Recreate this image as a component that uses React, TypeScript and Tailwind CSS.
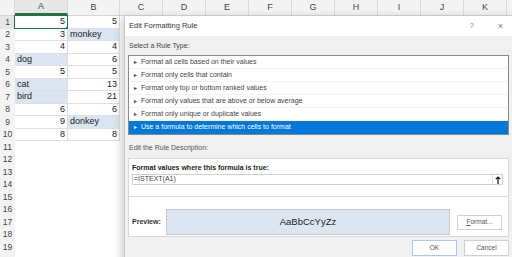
import React from "react";

const COLS = ["A", "B", "C", "D", "E", "F", "G", "H", "I", "J", "K", ""];
const WIDTHS = [53, 52, 43, 43, 43, 43, 43, 43, 43, 43, 43, 43];

type Cell = { v: string; num?: boolean; fill?: boolean };
const DATA: [Cell, Cell][] = [
  [{ v: "5", num: true }, { v: "5", num: true }],
  [{ v: "3", num: true }, { v: "monkey", fill: true }],
  [{ v: "4", num: true }, { v: "4", num: true }],
  [{ v: "dog", fill: true }, { v: "6", num: true }],
  [{ v: "5", num: true }, { v: "5", num: true }],
  [{ v: "cat", fill: true }, { v: "13", num: true }],
  [{ v: "bird", fill: true }, { v: "21", num: true }],
  [{ v: "6", num: true }, { v: "6", num: true }],
  [{ v: "9", num: true }, { v: "donkey", fill: true }],
  [{ v: "8", num: true }, { v: "8", num: true }],
];

const RULES = [
  "Format all cells based on their values",
  "Format only cells that contain",
  "Format only top or bottom ranked values",
  "Format only values that are above or below average",
  "Format only unique or duplicate values",
  "Use a formula to determine which cells to format",
];

function Sheet() {
  const rows = Array.from({ length: 19 }, (_, i) => i + 1);
  return (
    <div className="flex flex-col h-[257px]" style={{ fontFamily: '"Liberation Sans", Arial, sans-serif' }}>
      <div className="flex h-[16px] shrink-0 bg-[#f3f3f3] border-b border-[#d4d4d4]">
        <div className="w-[15px] shrink-0 border-r border-[#dadada]" />
        {COLS.map((c, i) => (
          <div
            key={i}
            style={{ width: WIDTHS[i] }}
            className={`shrink-0 flex items-center justify-center text-[9px] text-[#444] border-r border-[#dadada] ${
              i === 0 ? "bg-[#e6e6e6] border-b-2 border-b-[#217346]" : ""
            }`}
          >
            {c}
          </div>
        ))}
      </div>
      {rows.map((r) => {
        const d = DATA[r - 1];
        return (
          <div key={r} className="flex h-[12.5px] shrink-0">
            <div
              className={`w-[15px] shrink-0 flex items-center justify-center text-[8.5px] text-[#444] ${
                r === 1 ? "bg-[#e6e6e6]" : "bg-[#f3f3f3]"
              }`}
            >
              {r}
            </div>
            {d
              ? d.map((cell, ci) => (
                  <div
                    key={ci}
                    style={{ width: WIDTHS[ci] }}
                    className={`shrink-0 relative flex items-center px-[2px] text-[9px] text-[#222] border-r border-b border-[#dedede] ${
                      cell.num ? "justify-end" : "justify-start"
                    } ${cell.fill ? "bg-[#dbe5f1]" : "bg-white"}`}
                  >
                    {cell.v}
                    {r === 1 && ci === 0 && (
                      <>
                        <div className="absolute inset-[-1px] border border-[#217346]" />
                        <div className="absolute right-[-2px] bottom-[-2px] w-[3px] h-[3px] bg-[#217346]" />
                      </>
                    )}
                  </div>
                ))
              : null}
          </div>
        );
      })}
      <div className="flex flex-1">
        <div className="w-[15px] shrink-0 bg-[#f3f3f3]" />
      </div>
    </div>
  );
}

function Dialog() {
  return (
    <div
      className="absolute left-[124px] top-[15px] w-[390px] h-[250px] bg-[#f0f0f0] border border-[#c8c8c8] shadow-[-3px_2px_8px_rgba(0,0,0,0.18)] flex flex-col text-[#333]"
      style={{ fontFamily: '"Liberation Sans", Arial, sans-serif' }}
    >
      <div className="h-[20px] bg-white flex items-center pl-[4px] pr-[10px] shrink-0">
        <span className="text-[7.5px] text-[#333]">Edit Formatting Rule</span>
        <span className="ml-auto text-[7px] text-[#777]">?</span>
        <span className="ml-[24px] text-[9px] text-[#777] leading-none">×</span>
      </div>
      <div className="flex flex-col pl-[3px] pr-[3px]">
        <div className="h-[19px] flex items-end pb-[4px] pl-[1px] text-[7px] text-[#444]">Select a Rule Type:</div>
        <div className="w-[381px] border border-[#8a8a8a] bg-white flex flex-col">
          {RULES.map((r, i) => {
            const sel = i === RULES.length - 1;
            return (
              <div
                key={r}
                className={`h-[13px] flex items-center pl-[4px] text-[7px] ${
                  sel ? "bg-[#0078d7] text-white" : "text-[#444] border-b border-[#f2f2f2]"
                }`}
              >
                <span className="text-[5px] mr-[3px] leading-none">►</span>
                {r}
              </div>
            );
          })}
        </div>
        <div className="h-[23px] flex items-center pl-[1px] pt-[3px] text-[7px] text-[#555]">Edit the Rule Description:</div>
        <div className="w-[381px] h-[79px] border border-[#d8d8d8] bg-white flex flex-col">
          <div className="h-[14px] flex items-end pl-[3px] text-[7px] font-bold text-[#222]">
            Format values where this formula is true:
          </div>
          <div className="mt-[1px] ml-[3px] w-[371px] h-[11px] border border-[#d0d0d0] flex items-center">
            <span className="pl-[1px] text-[7px] text-[#444]">=ISTEXT(A1)</span>
            <div className="ml-auto w-[10px] h-full border-l border-[#e0e0e0] flex items-center justify-center">
              <svg width="6" height="8" viewBox="0 0 6 8">
                <path d="M3 1 V8 M0.8 3.2 L3 1 L5.2 3.2" stroke="#111" strokeWidth="1.2" fill="none" />
              </svg>
            </div>
          </div>
          <div className="mt-[11px] h-px bg-[#d8d8d8]" />
          <div className="flex items-center mt-[12px]">
            <div className="w-[37px] pl-[3px] text-[7px] font-bold text-[#333]">Preview:</div>
            <div className="w-[284px] h-[26px] bg-[#dce6f2] border border-[#c8c8c8] flex items-center justify-center text-[9.5px] text-[#222]">
              AaBbCcYyZz
            </div>
            <div className="ml-[7px] w-[45px] h-[15px] border border-[#d0d0d0] bg-white flex items-center justify-center text-[6.5px] text-[#555]">
              <span className="underline">F</span>ormat...
            </div>
          </div>
        </div>
        <div className="flex justify-end gap-[7px] mt-[3px] pr-[1px]">
          <div className="w-[45px] h-[16px] border border-[#a9c8ea] bg-white flex items-center justify-center text-[6.5px] text-[#555]">
            OK
          </div>
          <div className="w-[45px] h-[16px] border border-[#d0d0d0] bg-white flex items-center justify-center text-[6.5px] text-[#555]">
            Cancel
          </div>
        </div>
      </div>
    </div>
  );
}

export default function App() {
  return (
    <div className="relative w-[512px] h-[257px] overflow-hidden bg-white">
      <Sheet />
      <Dialog />
    </div>
  );
}
